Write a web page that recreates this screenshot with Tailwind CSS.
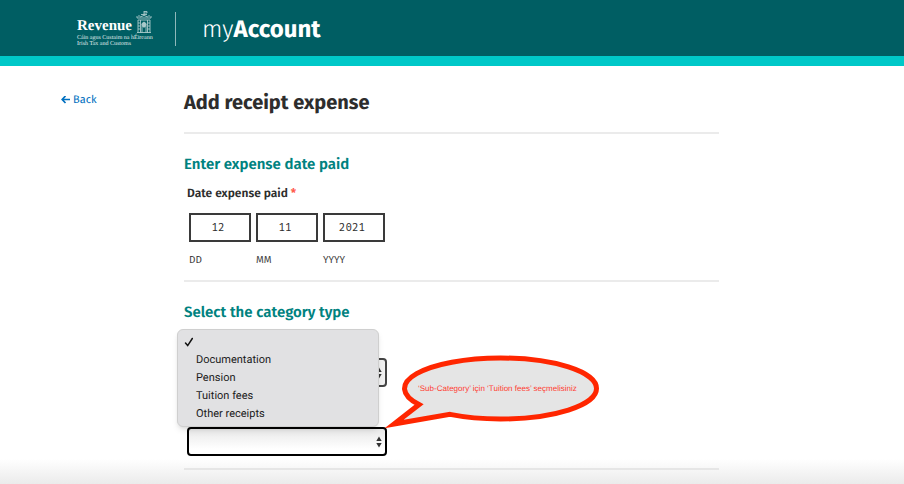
<!DOCTYPE html>
<html lang="en">
<head>
<meta charset="utf-8">
<meta name="viewport" content="width=device-width, initial-scale=1">
<title>Add receipt expense - myAccount</title>
<script src="https://cdn.jsdelivr.net/npm/@tailwindcss/browser@4"></script>
</head>
<body class="flex min-h-screen flex-col bg-white font-['Fira_Sans','Roboto',sans-serif] text-[#2d2d2d] [text-rendering:geometricPrecision]">
<header class="flex h-[66px] items-start border-b-10 border-[#00c8c8] bg-[#005e63] pt-3 pl-[77px] text-white">
  <a href="#" aria-label="Revenue home" class="flex h-[34px] w-[99px] flex-col border-r border-[#8fb8ba]">
    <span class="flex h-[22px] items-end gap-1">
      <span class="w-[55px] font-['Liberation_Serif',serif] text-[15px] leading-4 font-bold">Revenue</span>
      <svg class="h-6 w-4 shrink-0" viewBox="0 0 16 24" fill="none" stroke="#a9cacb" stroke-width=".9" aria-hidden="true">
        <path d="M8 6V1M8 1.500h3v1.500H8M5 4.500h6M4 7q4-3 8 0M1 8h14M2 10h12M1 22.500h14M2 10v13M4.500 10v13M11.500 10v13M14 10v13"/>
        <path d="M6 23v-7q-1-3 2-4 3 1 2 4v7"/><path d="M6 14q2-3 4 0l-1 3H7z" fill="#a9cacb"/>
        <path d="M1 8V6M15 8V6M3 7V5M13 7V5M2 13h2M2 16h2M2 19h2M12 13h2M12 16h2M12 19h2"/>
      </svg>
    </span>
    <span class="mt-px font-['Liberation_Serif',serif] text-[6px] leading-[6px] whitespace-nowrap text-[#e2eeee]">Cáin agus Custaim na hÉireann<br>Irish Tax and Customs</span>
  </a>
  <span class="pl-[26px] pt-0.5 text-[24px] leading-8 font-light">my<b class="font-bold">Account</b></span>
</header>

<main class="flex flex-1 bg-linear-to-t from-[#ebebeb] via-white via-[6%] to-white pt-6 pl-[61px]">
  <nav class="w-[123px] shrink-0 pt-0.5">
    <a href="#" class="flex items-center gap-[3px] text-[11px] leading-4 text-[#0070c0]">
      <svg class="h-[9px] w-[9px]" viewBox="0 0 9 9" fill="none" stroke="currentColor" stroke-width="1.7" aria-hidden="true"><path d="M4.500 0L1.200 3.500l3.300 3.500M1.200 3.500H9"/></svg>Back</a>
  </nav>
  <form class="mr-4 w-full max-w-[535px]">
    <h1 class="border-b-2 border-[#ebebeb] pt-px pb-[17px] text-[20px] leading-6 font-bold">Add receipt expense</h1>

    <section class="border-b-2 border-[#ebebeb] pt-5 pb-3">
      <h2 class="text-[15px] leading-5 font-semibold text-[#00827f]">Enter expense date paid</h2>
      <fieldset class="pt-[7px] pl-[3px]">
        <legend class="contents text-[12px] leading-4 font-semibold">Date expense paid <span class="text-[#ff5a4d]">*</span></legend>
        <div class="flex gap-[5px] pt-2 pl-[2px] text-[11px]">
          <div class="flex flex-col-reverse gap-2.5">
            <label for="dd" class="text-[10px] leading-4 text-[#444]">DD</label>
            <input id="dd" value="12" class="h-[29px] w-[62px] border-2 border-[#3a3a3a] bg-white pr-1 text-center font-['Fira_Mono','DejaVu_Sans_Mono',monospace]">
          </div>
          <div class="flex flex-col-reverse gap-2.5">
            <label for="mm" class="text-[10px] leading-4 text-[#444]">MM</label>
            <input id="mm" value="11" class="h-[29px] w-[62px] border-2 border-[#3a3a3a] bg-white pr-1 text-center font-['Fira_Mono','DejaVu_Sans_Mono',monospace]">
          </div>
          <div class="flex flex-col-reverse gap-2.5">
            <label for="yyyy" class="text-[10px] leading-4 text-[#444]">YYYY</label>
            <input id="yyyy" value="2021" class="h-[29px] w-[62px] border-2 border-[#3a3a3a] bg-white pr-1 text-center font-['Fira_Mono','DejaVu_Sans_Mono',monospace]">
          </div>
        </div>
      </fieldset>
    </section>

    <section class="border-b-2 border-[#e6e6e6] pt-5 pb-3">
      <h2 class="text-[15px] leading-5 font-semibold text-[#00827f]">Select the category type</h2>
      <div class="relative ml-[3px] flex w-[200px] flex-col gap-10 pt-9">
        <div class="grid">
          <select aria-label="Category" class="col-start-1 row-start-1 h-[29px] appearance-none rounded-sm border-2 border-[#444] bg-[#f1f1f1]"><option></option></select>
          <svg class="pointer-events-none col-start-1 row-start-1 mr-1 h-3 w-2 self-center justify-self-end" viewBox="0 0 8 12" fill="#333" aria-hidden="true"><path d="M4 .5l2.700 4.500H1.300zM4 11.500L1.300 7h5.400z"/></svg>
        </div>
        <div class="grid">
          <select aria-label="Sub-Category" class="col-start-1 row-start-1 h-[29px] appearance-none rounded-sm border-2 border-black bg-linear-to-b from-[#e8e8e8] to-white to-80%"><option></option></select>
          <svg class="pointer-events-none col-start-1 row-start-1 mr-1 h-3 w-2 self-center justify-self-end" viewBox="0 0 8 12" fill="#333" aria-hidden="true"><path d="M4 .5l2.700 4.500H1.300zM4 11.500L1.300 7h5.400z"/></svg>
        </div>

        <ul role="listbox" aria-label="Sub-Category options" class="absolute top-[7px] -left-[10px] w-[202px] rounded-md border border-[#cfcfcf] bg-[#e1e1e3] py-[3px] font-['Roboto',sans-serif] text-[11px] leading-[18px] text-[#1b1b1b] shadow-md">
          <li role="option" aria-selected="true" class="flex h-[18px] items-center pl-1.5">
            <svg class="h-2.5 w-2.5" viewBox="0 0 10 10" fill="none" stroke="#111" stroke-width="1.5" stroke-linecap="round" aria-hidden="true"><path d="M1.500 6l2.200 2.600L8.300 1.500"/></svg>
          </li>
          <li role="option" class="pl-[18px]">Documentation</li>
          <li role="option" class="pl-[18px]">Pension</li>
          <li role="option" class="pl-[18px]">Tuition fees</li>
          <li role="option" class="pl-[18px]">Other receipts</li>
        </ul>

        <div class="absolute top-[31px] left-[193px] grid h-[80px] w-[220px]">
          <svg class="col-start-1 row-start-1" viewBox="380 353 220 80" fill="#e5e5e5" stroke="#ff2600" stroke-width="5" stroke-miterlimit="10" aria-hidden="true"><path d="M419 404.600A96 30.500 0 0 1 500.500 358A96 30.500 0 0 1 500.500 419A96 30.500 0 0 1 450 414.400L394 424Z"/></svg>
          <p class="col-start-1 row-start-1 pt-[30px] pl-[38px] font-['Liberation_Sans',sans-serif] text-[8px] leading-3 whitespace-nowrap text-[#ff3b30]">‘Sub-Category’ için ‘Tuition fees’ seçmelisiniz</p>
        </div>
      </div>
    </section>
  </form>
</main>
</body>
</html>
